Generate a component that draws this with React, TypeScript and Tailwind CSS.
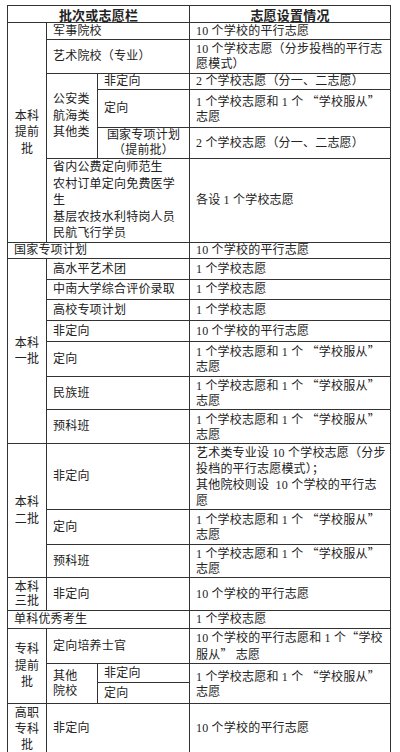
import React from "react";

const td = "border border-[#333] px-[6px] py-0 align-middle";

// full-width curly quotes, drawn in the CJK face
const Lq = () => <span className="font-['Noto_Sans_CJK_SC',sans-serif] [font-feature-settings:'fwid']">“</span>;
const Rq = () => <span className="font-['Noto_Sans_CJK_SC',sans-serif] [font-feature-settings:'fwid']">”</span>;

function Lines({ lines }: { lines: React.ReactNode[] }) {
  return (
    <>
      {lines.map((l, i) => (
        <div key={i} className="whitespace-nowrap">
          {l}
        </div>
      ))}
    </>
  );
}

const fuCong = (
  <Lines
    lines={[
      <>
        1 个学校志愿和 1 个 <Lq />学校服从<Rq />
      </>,
      "志愿",
    ]}
  />
);

export default function App() {
  return (
    <div className="min-h-[752px] w-[400px] bg-white pt-[5px] pl-[7px] text-[12px] leading-[15px] tracking-[0.2px] text-[#222] font-['Liberation_Serif','Noto_Sans_CJK_SC',serif]">
      <table className="w-[383px] table-fixed border-collapse border border-[#333]">
        <colgroup>
          <col className="w-[39px]" />
          <col className="w-[51px]" />
          <col className="w-[92px]" />
          <col className="w-[201px]" />
        </colgroup>
        <tbody>
          <tr className="h-[17px]">
            <td colSpan={3} className={`${td} text-center text-[13px] font-bold font-['Noto_Sans_CJK_SC',sans-serif]`}>
              批次或志愿栏
            </td>
            <td className={`${td} text-center text-[13px] font-bold font-['Noto_Sans_CJK_SC',sans-serif]`}>志愿设置情况</td>
          </tr>

          {/* 本科提前批 */}
          <tr className="h-[17px]">
            <td rowSpan={6} className={`${td} text-center leading-[16.5px]`}>
              本科<br />提前<br />批
            </td>
            <td colSpan={2} className={td}>军事院校</td>
            <td className={td}>10 个学校的平行志愿</td>
          </tr>
          <tr className="h-[34px]">
            <td colSpan={2} className={td}>艺术院校（专业）</td>
            <td className={td}>
              <Lines lines={["10 个学校志愿（分步投档的平行志", "愿模式）"]} />
            </td>
          </tr>
          <tr className="h-[16px]">
            <td rowSpan={3} className={`${td} leading-[16.5px]`}>公安类航海类其他类</td>
            <td className={td}>非定向</td>
            <td className={td}>2 个学校志愿（分一、二志愿）</td>
          </tr>
          <tr className="h-[38px]">
            <td className={td}>定向</td>
            <td className={td}>{fuCong}</td>
          </tr>
          <tr className="h-[30px]">
            <td className={`${td} text-center`}>
              国家专项计划<br />（提前批）
            </td>
            <td className={td}>2 个学校志愿（分一、二志愿）</td>
          </tr>
          <tr className="h-[84px]">
            <td colSpan={2} className={`${td} leading-[16.5px]`}>
              省内公费定向师范生<br />农村订单定向免费医学<br />生<br />基层农技水利特岗人员<br />民航飞行学员
            </td>
            <td className={td}>各设 1 个学校志愿</td>
          </tr>

          <tr className="h-[16px]">
            <td colSpan={3} className={td}>国家专项计划</td>
            <td className={td}>10 个学校的平行志愿</td>
          </tr>

          {/* 本科一批 */}
          <tr className="h-[21px]">
            <td rowSpan={7} className={`${td} text-center leading-[16.5px]`}>
              本科<br />一批
            </td>
            <td colSpan={2} className={td}>高水平艺术团</td>
            <td className={td}>1 个学校志愿</td>
          </tr>
          <tr className="h-[20px]">
            <td colSpan={2} className={td}>中南大学综合评价录取</td>
            <td className={td}>1 个学校志愿</td>
          </tr>
          <tr className="h-[21px]">
            <td colSpan={2} className={td}>高校专项计划</td>
            <td className={td}>1 个学校志愿</td>
          </tr>
          <tr className="h-[21px]">
            <td colSpan={2} className={td}>非定向</td>
            <td className={td}>10 个学校的平行志愿</td>
          </tr>
          <tr className="h-[35px]">
            <td colSpan={2} className={td}>定向</td>
            <td className={td}>{fuCong}</td>
          </tr>
          <tr className="h-[32px]">
            <td colSpan={2} className={td}>民族班</td>
            <td className={td}>{fuCong}</td>
          </tr>
          <tr className="h-[34px]">
            <td colSpan={2} className={td}>预科班</td>
            <td className={td}>{fuCong}</td>
          </tr>

          {/* 本科二批 */}
          <tr className="h-[66px]">
            <td rowSpan={3} className={`${td} text-center leading-[16.5px]`}>
              本科<br />二批
            </td>
            <td colSpan={2} className={td}>非定向</td>
            <td className={`${td} leading-[16px]`}>
              <Lines
                lines={[
                  "艺术类专业设 10 个学校志愿（分步",
                  "投档的平行志愿模式）；",
                  "其他院校则设\u00a0\u00a010 个学校的平行志",
                  "愿",
                ]}
              />
            </td>
          </tr>
          <tr className="h-[35px]">
            <td colSpan={2} className={td}>定向</td>
            <td className={td}>{fuCong}</td>
          </tr>
          <tr className="h-[33px]">
            <td colSpan={2} className={td}>预科班</td>
            <td className={td}>{fuCong}</td>
          </tr>

          <tr className="h-[33px]">
            <td className={`${td} text-center leading-[14px]`}>
              本科<br />三批
            </td>
            <td colSpan={2} className={td}>非定向</td>
            <td className={td}>10 个学校的平行志愿</td>
          </tr>

          <tr className="h-[18px]">
            <td colSpan={3} className={td}>单科优秀考生</td>
            <td className={td}>1 个学校志愿</td>
          </tr>

          {/* 专科提前批 */}
          <tr className="h-[32px]">
            <td rowSpan={3} className={`${td} text-center leading-[16.5px]`}>
              专科<br />提前<br />批
            </td>
            <td colSpan={2} className={td}>定向培养士官</td>
            <td className={td}>
              <Lines
                lines={[
                  <>
                    10 个学校的平行志愿和 1 个<Lq />学校
                  </>,
                  <>
                    服从<Rq /> 志愿
                  </>,
                ]}
              />
            </td>
          </tr>
          <tr className="h-[19px]">
            <td rowSpan={2} className={td}>
              其他<br />院校
            </td>
            <td className={td}>非定向</td>
            <td rowSpan={2} className={td}>{fuCong}</td>
          </tr>
          <tr className="h-[21px]">
            <td className={td}>定向</td>
          </tr>

          <tr className="h-[50px]">
            <td className={`${td} text-center leading-[16px]`}>
              高职<br />专科<br />批
            </td>
            <td colSpan={2} className={td}>非定向</td>
            <td className={td}>10 个学校的平行志愿</td>
          </tr>
        </tbody>
      </table>
    </div>
  );
}
